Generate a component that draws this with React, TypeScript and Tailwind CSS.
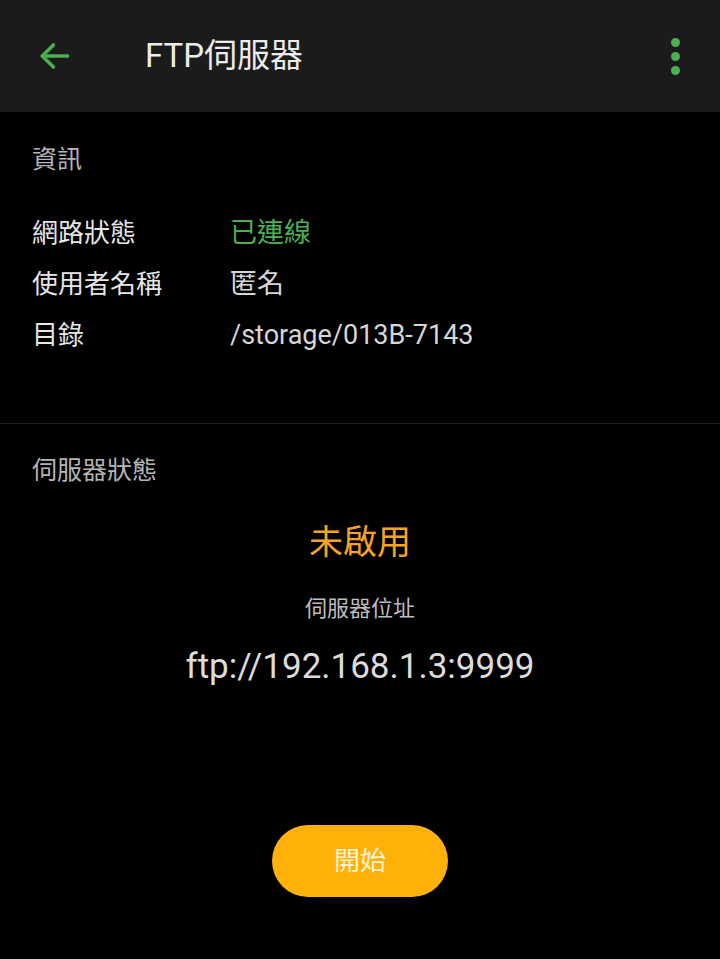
import React from 'react';

const font = { fontFamily: 'Roboto, "Noto Sans CJK TC", sans-serif' };

const rows = [
  { label: '網路狀態', value: '已連線', tone: 'text-[#4caf50]' },
  { label: '使用者名稱', value: '匿名', tone: 'text-[#d6d6d6]' },
  { label: '目錄', value: '/storage/013B-7143', tone: 'text-[#d6d6d6]' },
];

const App: React.FC = () => {
  return (
    <div className="min-h-[959px] w-[720px] bg-black text-[#e6e6e6]" style={font}>
      {/* Toolbar */}
      <header className="flex h-[112px] items-center bg-[#1b1b1b] pr-[40px]">
        <button className="flex h-[112px] w-[110px] items-center pl-[36px]">
          <svg width="38" height="38" viewBox="0 0 24 24" fill="none" stroke="#4caf50" strokeWidth="2.2" strokeLinecap="round" strokeLinejoin="round">
            <path d="M20 12H4" />
            <path d="M11 5l-7 7 7 7" />
          </svg>
        </button>
        <h1 className="ml-[35px] flex-1 text-[33px] leading-[40px] text-[#ececec]">FTP伺服器</h1>
        <div className="flex flex-col gap-[5px]">
          <span className="h-[9px] w-[9px] rounded-full bg-[#4caf50]" />
          <span className="h-[9px] w-[9px] rounded-full bg-[#4caf50]" />
          <span className="h-[9px] w-[9px] rounded-full bg-[#4caf50]" />
        </div>
      </header>

      {/* Info */}
      <section className="px-[32px] pt-[32px] pb-[62px]">
        <h2 className="text-[25px] leading-[32px] text-[#b5b5b5]">資訊</h2>
        <div className="mt-[32px]">
          {rows.map((r) => (
            <div key={r.label} className="flex h-[51px] items-center text-[26px]">
              <span className="w-[198px] text-[#e6e6e6]">{r.label}</span>
              <span className={`text-[27px] ${r.tone}`}>{r.value}</span>
            </div>
          ))}
        </div>
      </section>

      <div className="h-px bg-[#1e1e1e]" />

      {/* Server status */}
      <section className="flex flex-col pt-[31px]">
        <h2 className="px-[32px] text-[25px] leading-[32px] text-[#b5b5b5]">伺服器狀態</h2>
        <div className="mt-[35px] text-center text-[34px] leading-[40px] text-[#f5a324]">未啟用</div>
        <div className="mt-[32px] text-center text-[22px] leading-[30px] text-[#bdbdbd]">伺服器位址</div>
        <div className="mt-[23px] text-center text-[35px] leading-[40px] text-[#dcdcdc]">ftp://192.168.1.3:9999</div>
        <div className="mt-[138px] flex justify-center">
          <button className="h-[72px] w-[176px] rounded-full bg-[#ffb10a] text-[26px] text-[#fff3d6]">開始</button>
        </div>
      </section>
    </div>
  );
};

export default App;
